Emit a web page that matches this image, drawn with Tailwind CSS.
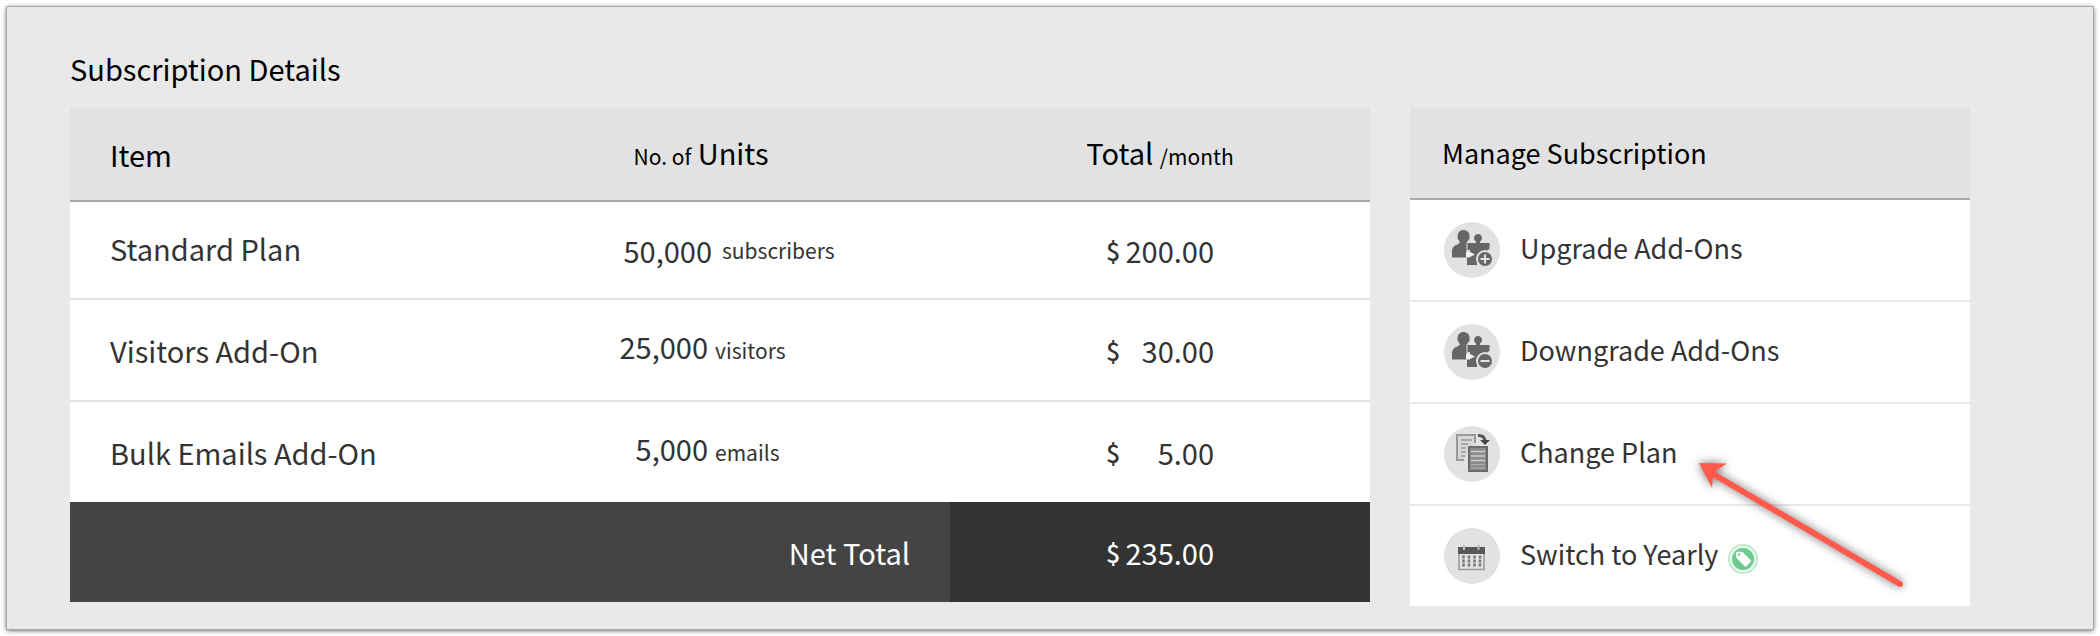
<!DOCTYPE html>
<html lang="en">
<head>
    <meta charset="UTF-8">
    <meta name="viewport" content="width=device-width, initial-scale=1.0">
    <title>Subscription Details</title>

    <!-- Tailwind CSS -->
    <script src="https://cdn.jsdelivr.net/npm/@tailwindcss/browser@4"></script>
</head>
<body class="bg-white p-[7px] font-['Noto_Sans_CJK_SC',sans-serif] text-[29px] leading-10 text-[#333]">
    <main class="bg-[#e9e9e9] pt-[41px] pb-[23px] pl-[63px] pr-[123px] shadow-[0_0_0_1px_#a8a8a8,0_1px_5px_rgba(0,0,0,0.8)]">
        <h1 class="mb-5 text-black">Subscription Details</h1>

        <div class="grid grid-cols-[1300fr_560fr] gap-10 items-start">
            <!-- Plan and add-ons -->
            <table class="w-full table-fixed border-separate border-spacing-0 bg-white">
                <colgroup>
                    <col>
                    <col class="w-[498px]">
                    <col class="w-[420px]">
                </colgroup>
                <thead>
                    <tr class="h-[94px] bg-[#e2e2e2] text-black">
                        <th scope="col" class="border-b-2 border-[#a9a9a9] pl-10 text-left font-normal">Item</th>
                        <th scope="col" class="border-b-2 border-[#a9a9a9] font-normal"><span class="text-[21px]">No. of</span> Units</th>
                        <th scope="col" class="border-b-2 border-[#a9a9a9] font-normal">Total <span class="text-[21px]">/month</span></th>
                    </tr>
                </thead>
                <tbody>
                    <tr class="h-[98px]">
                        <td class="border-b-2 border-[#e2e2e2] pb-1 pl-10">Standard Plan</td>
                        <td class="border-b-2 border-[#e2e2e2]">
                            <div class="flex items-center gap-[10px]">
                                <span class="w-[260px] text-right">50,000</span>
                                <span class="text-[21px]">subscribers</span>
                            </div>
                        </td>
                        <td class="border-b-2 border-[#e2e2e2]">
                            <div class="mx-auto flex w-[108px] items-center justify-between"><span class="text-[25px] font-medium">$</span><span>200.00</span></div>
                        </td>
                    </tr>
                    <tr class="h-[102px]">
                        <td class="border-b-2 border-[#e2e2e2] pl-10">Visitors Add-On</td>
                        <td class="border-b-2 border-[#e2e2e2] pb-1">
                            <div class="flex items-baseline gap-[7px]">
                                <span class="w-[256px] text-right">25,000</span>
                                <span class="text-[21px]">visitors</span>
                            </div>
                        </td>
                        <td class="border-b-2 border-[#e2e2e2]">
                            <div class="mx-auto flex w-[108px] items-center justify-between"><span class="text-[25px] font-medium">$</span><span>30.00</span></div>
                        </td>
                    </tr>
                    <tr class="h-[100px]">
                        <td class="pl-10">Bulk Emails Add-On</td>
                        <td class="pb-1">
                            <div class="flex items-baseline gap-[7px]">
                                <span class="w-[256px] text-right">5,000</span>
                                <span class="text-[21px]">emails</span>
                            </div>
                        </td>
                        <td>
                            <div class="mx-auto flex w-[108px] items-center justify-between"><span class="text-[25px] font-medium">$</span><span>5.00</span></div>
                        </td>
                    </tr>
                </tbody>
                <tfoot>
                    <tr class="h-[100px] bg-[#444] text-white">
                        <th scope="row" colspan="2" class="pr-10 text-right font-normal">Net Total</th>
                        <td class="bg-[#333]">
                            <div class="mx-auto flex w-[108px] items-center justify-between"><span class="text-[25px] font-medium">$</span><span>235.00</span></div>
                        </td>
                    </tr>
                </tfoot>
            </table>

            <!-- Actions -->
            <section class="bg-white text-[27px]">
                <h2 class="flex h-[92px] items-center border-b-2 border-[#a9a9a9] bg-[#e2e2e2] pl-8 text-black">Manage Subscription</h2>
                <ul class="divide-y-2 divide-[#e9e9e9]">
                    <li>
                        <a href="#" class="flex h-[100px] items-center gap-5 pl-[34px]">
                            <svg class="size-14 shrink-0" viewBox="0 0 56 56" aria-hidden="true">
                                <circle cx="28" cy="28" r="28" fill="#e2e2e2" />
                                <path fill="#666" d="M23 21h9v-1.500a4 4 0 1 1 4 0V21h9.500v6l-2 1v5H33v10H23v-7.500h3V28h-3z" />
                                <path fill="#666" stroke="#e2e2e2" stroke-width="1" d="M19.500 7.500a7 7 0 0 1 4 12.500c-.5 1-1 2-.5 2.500v13.500H7.500v-6c0-5 3-7 7-8.500 1-.5 1-1.500.5-2A7 7 0 0 1 19.500 7.500z" />
                                <path fill="#f2f2f2" d="M22 30h4l5 2.500-5 2.500h-4z" />
                                <circle cx="41" cy="37" r="8" fill="#666" stroke="#e2e2e2" stroke-width="2" />
                                <path stroke="#e2e2e2" stroke-width="2" d="M36.500 37h9M41 32.500v9" />
                            </svg>
                            <span class="pb-1">Upgrade Add-Ons</span>
                        </a>
                    </li>
                    <li>
                        <a href="#" class="flex h-[100px] items-center gap-5 pl-[34px]">
                            <svg class="size-14 shrink-0" viewBox="0 0 56 56" aria-hidden="true">
                                <circle cx="28" cy="28" r="28" fill="#e2e2e2" />
                                <path fill="#666" d="M23 21h9v-1.500a4 4 0 1 1 4 0V21h9.500v6l-2 1v5H33v10H23v-7.500h3V28h-3z" />
                                <path fill="#666" stroke="#e2e2e2" stroke-width="1" d="M19.500 7.500a7 7 0 0 1 4 12.500c-.5 1-1 2-.5 2.500v13.500H7.500v-6c0-5 3-7 7-8.500 1-.5 1-1.500.5-2A7 7 0 0 1 19.500 7.500z" />
                                <path fill="#f2f2f2" d="M22 30h4l5 2.500-5 2.500h-4z" />
                                <circle cx="41" cy="37" r="8" fill="#666" stroke="#e2e2e2" stroke-width="2" />
                                <path stroke="#e2e2e2" stroke-width="2" d="M36.500 37h9" />
                            </svg>
                            <span class="pb-1">Downgrade Add-Ons</span>
                        </a>
                    </li>
                    <li class="relative">
                        <a href="#" class="flex h-[100px] items-center gap-5 pl-[34px]">
                            <svg class="size-14 shrink-0" viewBox="0 0 56 56" aria-hidden="true">
                                <circle cx="28" cy="28" r="28" fill="#e2e2e2" />
                                <path fill="#d8d8d8" stroke="#999" stroke-width="2" d="M31 17V9H13v25h7" />
                                <path fill="none" stroke="#999" stroke-width="1.500" d="M17 14h11M17 18h7M17 22h5M17 26h5M17 30h4" />
                                <path fill="none" stroke="#555" stroke-width="3" d="M34 9.500q6-.5 7 5" />
                                <path fill="#444" d="M36 14h10l-5 5z" />
                                <path fill="#8c8c8c" stroke="#6b6b6b" stroke-width="2" d="M25 21h18v24H25z" />
                                <path stroke="#d0d0d0" stroke-width="1.500" d="M27 25.500h14M27 30h14M27 34.500h14" />
                                <path stroke="#b0b0b0" stroke-width="1" d="M27 38.500h14M27 42h14" />
                            </svg>
                            <span class="pb-1">Change Plan</span>
                        </a>
                        <!-- Callout arrow -->
                        <svg class="pointer-events-none absolute left-[269px] top-[39px] h-[170px] w-[250px] overflow-visible drop-shadow-[0_0_5px_rgba(0,0,0,0.6)]" viewBox="0 0 250 170" aria-hidden="true">
                            <path stroke="#ff5a4b" stroke-width="6" stroke-linecap="round" d="M34 31L221 141" />
                            <path fill="#ff5a4b" d="M20 20L48 20.500L37 27.500L34 33L33 45z" />
                        </svg>
                    </li>
                    <li>
                        <a href="#" class="flex h-[100px] items-center gap-5 pl-[34px]">
                            <svg class="size-14 shrink-0" viewBox="0 0 56 56" aria-hidden="true">
                                <circle cx="28" cy="28" r="28" fill="#e2e2e2" />
                                <path fill="#e2e2e2" stroke="#999" stroke-width="1.500" d="M15 25h25v16.500H15z" />
                                <path fill="#585858" d="M14 19h27v7H14z" />
                                <path stroke="#bbb" stroke-width="2" d="M20 17v5M34.500 17v5" />
                                <path stroke="#777" stroke-width="2.500" stroke-dasharray="3 1" d="M19.500 27.500v12M25 27.500v12M30.500 27.500v12M36 27.500v12" />
                            </svg>
                            <span class="flex items-center gap-[10px] pb-1">
                                Switch to Yearly
                                <svg class="mt-[10px] size-[30px]" viewBox="0 0 30 30" aria-hidden="true">
                                    <circle cx="15" cy="15" r="15" fill="#b5e6c6" />
                                    <circle cx="15" cy="15" r="13.500" fill="#e9f8ee" />
                                    <circle cx="15" cy="15" r="11" fill="#6dcb8f" />
                                    <path fill="#fff" d="M8 10q0-2.500 2.500-2.500l4 .5 8 8q1 1 0 2l-4 4q-1 1-2 0l-8-8z" />
                                    <circle cx="11" cy="10.500" r="1.200" fill="#6dcb8f" />
                                </svg>
                            </span>
                        </a>
                    </li>
                </ul>
            </section>
        </div>
    </main>
</body>
</html>
